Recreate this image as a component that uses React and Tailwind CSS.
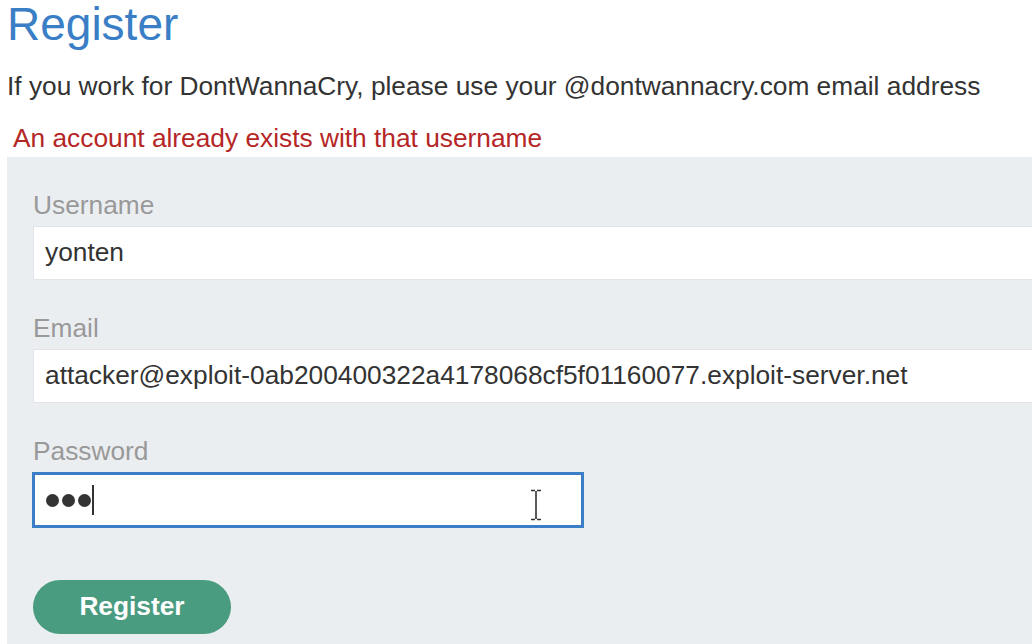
const Field = ({ label, children }) => (
  <div className="flex flex-col">
    <label className="text-[26.3px] leading-[28px] text-[#999999]">{label}</label>
    <div className="mt-[7px]">{children}</div>
  </div>
);

export default function App() {
  return (
    <div
      className="w-[1032px] h-[644px] overflow-hidden bg-white flex flex-col"
      style={{ fontFamily: '"Liberation Sans", Arial, sans-serif' }}
    >
      <h1 className="pl-[7px] text-[46px] leading-[48px] text-[#3a7ec6]">Register</h1>

      <p className="pl-[7px] mt-[24px] text-[26.3px] leading-[28px] text-[#333333] whitespace-nowrap">
        If you work for DontWannaCry, please use your @dontwannacry.com email address
      </p>

      <p className="pl-[13px] mt-[24px] text-[26.3px] leading-[28px] text-[#b52626] whitespace-nowrap">
        An account already exists with that username
      </p>

      <form className="ml-[7px] mt-[5px] flex-1 w-[1100px] bg-[#ebeef1] pl-[26px] pt-[34px] flex flex-col">
        <Field label="Username">
          <div className="h-[54px] bg-white border border-[#e1e4e8] flex items-center pl-[11px] text-[26.3px] text-[#333333]">
            yonten
          </div>
        </Field>

        <div className="mt-[34px]">
          <Field label="Email">
            <div className="h-[54px] bg-white border border-[#e1e4e8] flex items-center pl-[11px] text-[26.3px] text-[#333333] whitespace-nowrap">
              attacker@exploit-0ab200400322a4178068cf5f01160077.exploit-server.net
            </div>
          </Field>
        </div>

        <div className="mt-[34px]">
          <Field label="Password">
            <div className="relative -ml-[1px] w-[552px] h-[56px] bg-white border-[3px] border-[#3a7ec6] flex items-center pl-[11px]">
              <span className="flex items-center gap-[3px]">
                <span className="w-[13px] h-[13px] rounded-full bg-[#333333]"></span>
                <span className="w-[13px] h-[13px] rounded-full bg-[#333333]"></span>
                <span className="w-[13px] h-[13px] rounded-full bg-[#333333]"></span>
              </span>
              <span className="ml-[1px] w-[2px] h-[30px] bg-[#333333]"></span>
              <svg className="absolute left-[494px] top-[14px]" width="14" height="32" viewBox="0 0 14 32">
                <path d="M2 1.5 H6 M8 1.5 H12 M7 2 V30 M2 30.5 H6 M8 30.5 H12" stroke="#ffffff" strokeWidth="3.5" fill="none" />
                <path d="M2 1.5 H6 M8 1.5 H12 M7 2 V30 M2 30.5 H6 M8 30.5 H12" stroke="#333333" strokeWidth="1.6" fill="none" />
              </svg>
            </div>
          </Field>
        </div>

        <button
          type="button"
          className="mt-[52px] w-[198px] h-[54px] rounded-full bg-[#4a9c80] text-white font-bold text-[26.3px]"
        >
          Register
        </button>
      </form>
    </div>
  );
}
